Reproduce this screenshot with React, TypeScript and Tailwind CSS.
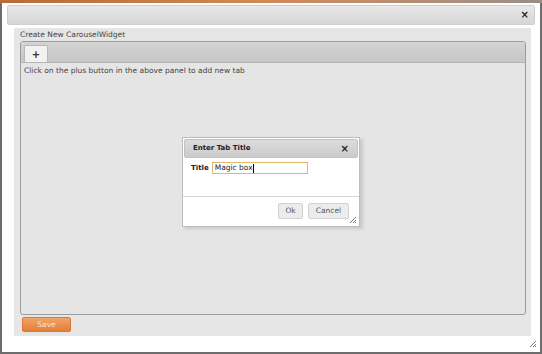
const Grip = ({ className }: { className: string }) => (
  <svg className={className} width="8" height="8" viewBox="0 0 8 8">
    <path d="M7 1 L1 7 M7 4 L4 7 M7 6 L6 7" stroke="#777" strokeWidth="1" />
  </svg>
);

const Close = () => (
  <span className="text-[10px] font-bold leading-none text-[#222]">×</span>
);

const App = () => {
  return (
    <div className="relative w-[542px] h-[354px] bg-white font-['DejaVu_Sans',sans-serif] text-[7.5px] text-[#333]">
      <div className="h-[3px] bg-gradient-to-r from-[#b86a3c] via-[#d08a5a] to-[#9a8f88]" />
      <div className="h-[351px] border-2 border-t-0 border-[#6d6d6d] bg-white relative flex flex-col">
        <div className="mx-[5px] mt-[2px] h-[20px] rounded-[2px] border border-[#cfcfcf] bg-gradient-to-b from-[#e8e8e8] to-[#d6d6d6] flex items-center justify-end pr-[5px]">
          <Close />
        </div>

        <div className="ml-[12px] mr-[9px] mt-[3px] h-[308px] bg-[#e6e6e6] flex flex-col">
          <div className="pl-[6px] pt-[1px] h-[13px] leading-[12px] text-[#444]">Create New CarouselWidget</div>

          <div className="ml-[6px] mr-[5px] h-[274px] rounded-[3px] border border-[#9c9c9c] bg-[#e5e5e5] flex flex-col">
            <div className="h-[21px] rounded-t-[2px] bg-gradient-to-b from-[#d4d4d4] to-[#c6c6c6] border-b border-[#b5b5b5] flex items-end pl-[3px]">
              <div className="w-[24px] h-[17px] rounded-t-[2px] border border-b-0 border-[#b8b8b8] bg-[#f2f2f2] flex items-center justify-center font-bold text-[10px] text-[#333]">
                +
              </div>
            </div>
            <div className="pl-[3px] pt-[2px] text-[#444]">Click on the plus button in the above panel to add new tab</div>
          </div>

          <div className="ml-[8px] mt-[2px] w-[49px] h-[15px] rounded-[2px] border border-[#d9783a] bg-gradient-to-b from-[#f3a366] to-[#e27f37] flex items-center justify-center text-[#fbe6d6] text-[7.5px]">
            Save
          </div>
        </div>

        <Grip className="absolute right-[3px] bottom-[4px]" />
      </div>

      <div className="absolute left-[182px] top-[137px] w-[178px] h-[90px] bg-white border border-[#bdbdbd] shadow-[3px_2px_3px_rgba(0,0,0,0.12)] flex flex-col">
        <div className="mx-[1px] mt-[1px] h-[19px] rounded-[2px] border border-[#c2c2c2] bg-gradient-to-b from-[#dcdcdc] to-[#cbcbcb] flex items-center justify-between pl-[8px] pr-[8px]">
          <span className="font-bold text-[7px] text-[#222]">Enter Tab Title</span>
          <Close />
        </div>
        <div className="h-[39px] flex items-start pl-[8px] pt-[4px] gap-[3px] border-b border-[#d6d6d6]">
          <span className="font-bold text-[7px] text-[#222] leading-[12px]">Title</span>
          <div className="w-[96px] h-[12px] border border-[#e2b66c] bg-white flex items-center pl-[2px] text-[#222]">
            Magic box<span className="w-[1px] h-[9px] bg-black" />
          </div>
        </div>
        <div className="flex justify-end gap-[5px] pr-[10px] pt-[6px]">
          <div className="w-[25px] h-[16px] rounded-[2px] border border-[#d2d2d2] bg-[#ececec] flex items-center justify-center text-[#555]">
            Ok
          </div>
          <div className="w-[41px] h-[16px] rounded-[2px] border border-[#d2d2d2] bg-[#ececec] flex items-center justify-center text-[#555]">
            Cancel
          </div>
        </div>
        <Grip className="absolute right-[2px] bottom-[2px]" />
      </div>
    </div>
  );
};

export default App;
